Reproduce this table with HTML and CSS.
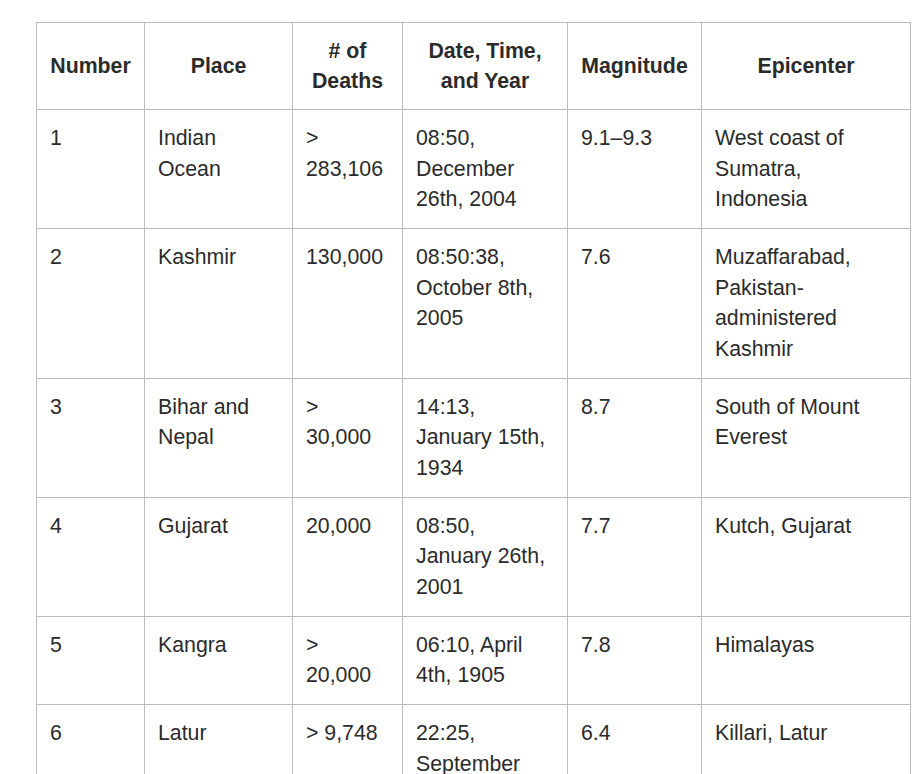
FILE: index.html
```html
<!DOCTYPE html>
<html>
<head>
<meta charset="utf-8">
<link rel="stylesheet" href="styles.css">
</head>
<body>
<table class="quakes">
<colgroup>
<col class="c1"><col class="c2"><col class="c3"><col class="c4"><col class="c5"><col class="c6">
</colgroup>
<thead>
<tr><th>Number</th><th>Place</th><th># of Deaths</th><th>Date, Time, and Year</th><th>Magnitude</th><th>Epicenter</th></tr>
</thead>
<tbody>
<tr><td>1</td><td>Indian Ocean</td><td>&gt; 283,106</td><td>08:50, December 26th, 2004</td><td>9.1–9.3</td><td>West coast of Sumatra, Indonesia</td></tr>
<tr><td>2</td><td>Kashmir</td><td>130,000</td><td>08:50:38, October 8th, 2005</td><td>7.6</td><td>Muzaffarabad, Pakistan-administered Kashmir</td></tr>
<tr><td>3</td><td>Bihar and Nepal</td><td>&gt; 30,000</td><td>14:13, January 15th, 1934</td><td>8.7</td><td>South of Mount Everest</td></tr>
<tr><td>4</td><td>Gujarat</td><td>20,000</td><td>08:50, January 26th, 2001</td><td>7.7</td><td>Kutch, Gujarat</td></tr>
<tr><td>5</td><td>Kangra</td><td>&gt; 20,000</td><td>06:10, April 4th, 1905</td><td>7.8</td><td>Himalayas</td></tr>
<tr><td>6</td><td>Latur</td><td>&gt; 9,748</td><td>22:25, September 30th, 1993</td><td>6.4</td><td>Killari, Latur</td></tr>
</tbody>
</table>
</body>
</html>
```
FILE: styles.css
```css
html, body {
  margin: 0;
  padding: 0;
  background: #fff;
}
body {
  padding: 22px 0 0 36px;
  font-family: "Liberation Sans", Arial, sans-serif;
  color: #2b2b2b;
  overflow: hidden;
}
.quakes {
  border-collapse: collapse;
  table-layout: fixed;
  width: 874px;
  font-size: 21.3px;
  line-height: 30.5px;
}
.c1 { width: 108px; }
.c2 { width: 148px; }
.c3 { width: 110px; }
.c4 { width: 165px; }
.c5 { width: 134px; }
.c6 { width: 209px; }
.quakes th,
.quakes td {
  border: 1px solid #bbb;
  padding: 13.25px 13px;
  vertical-align: top;
  text-align: left;
}
.quakes th {
  padding: 12.5px 13px;
  font-weight: bold;
  text-align: center;
  vertical-align: middle;
}
```
